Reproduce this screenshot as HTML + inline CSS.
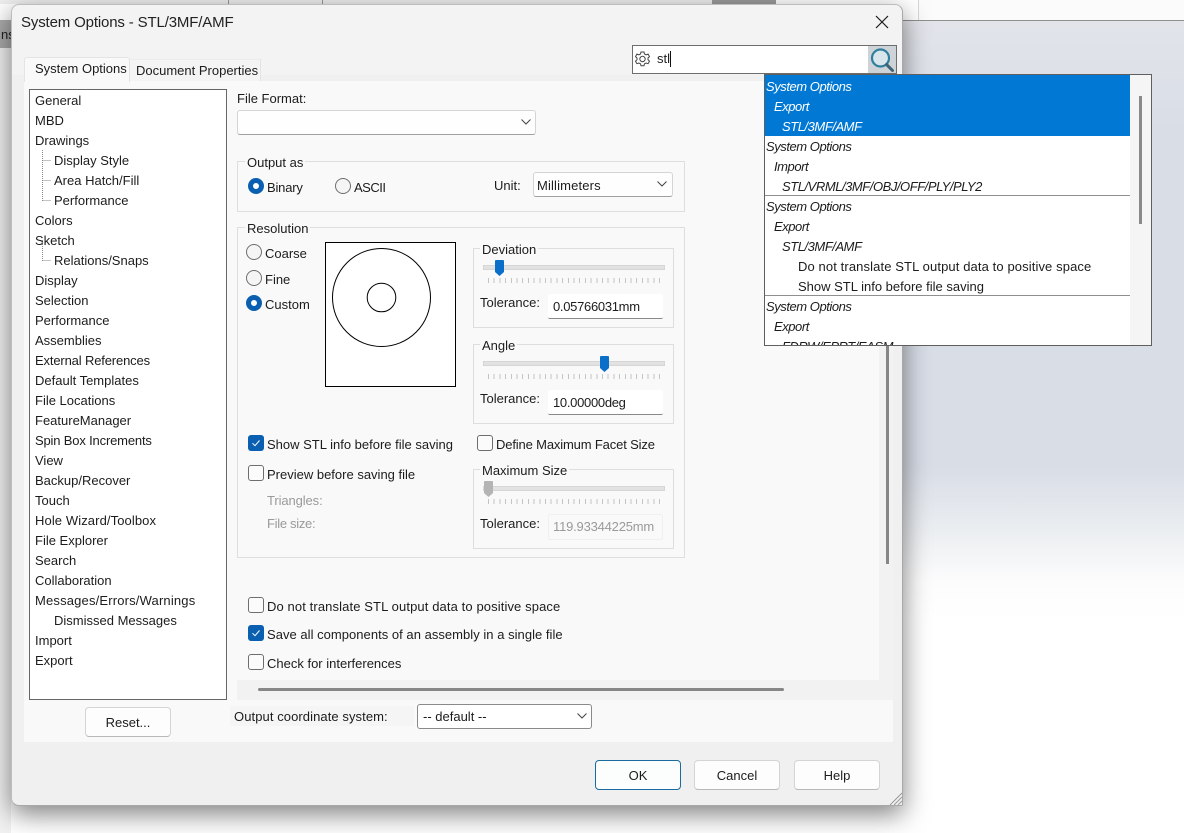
<!DOCTYPE html>
<html lang="en">
<head>
<meta charset="utf-8">
<title>System Options - STL/3MF/AMF</title>
<style>
html,body{margin:0;padding:0;width:1184px;height:833px;overflow:hidden;background:#fff}
body{position:relative;font-family:"Liberation Sans",sans-serif;font-size:13px;color:#1c1c1c}
div,span{box-sizing:border-box}
.a{position:absolute}
.t{position:absolute;white-space:nowrap;line-height:16px;font-size:13px;letter-spacing:0}
.g{color:#9a9a9a}
.i{font-style:italic;letter-spacing:-.45px}
.box{position:absolute;border:1px solid #dedede}
.lg{position:absolute;background:#f9f9f9;padding:0 2px;white-space:nowrap;line-height:16px;letter-spacing:0}
.btn{position:absolute;background:#fdfdfd;border:1px solid #d4d4d4;border-bottom-color:#b8b8b8;border-radius:4px;text-align:center;line-height:29px}
.sel{position:absolute;background:#fefefe;border:1px solid #d4d4d4;border-bottom-color:#a0a0a0;border-radius:3px}
.chev{position:absolute;width:10px;height:6px}
.r{position:absolute;width:16px;height:16px;border-radius:50%;border:1px solid #6e6e6e;background:#f5f5f5}
.r.on{border:5px solid #0a5fb0;background:#fff}
.c{position:absolute;width:16px;height:16px;border-radius:3px;border:1px solid #6e6e6e;background:#fbfbfb}
.c.on{border:0;background:#0a5fb0}
.track{position:absolute;height:5px;background:#e2e2e2;border:1px solid #d6d6d6}
.tick{position:absolute;height:5px;background:repeating-linear-gradient(90deg,#c4c4c4 0 1px,transparent 1px 5.7px)}
.inp{position:absolute;background:#fff;border-bottom:1px solid #8a8a8a;border-radius:2px;line-height:26px;padding-left:5px;letter-spacing:-.3px;white-space:nowrap}
.sl{position:absolute;width:9px;height:16px}
</style>
</head>
<body>
<!-- desktop background -->
<div class="a" style="left:918px;top:0;width:266px;height:20px;background:#fbfbfb;border-left:1px solid #d8d8d8"></div>
<div class="a" style="left:903px;top:20px;width:281px;height:1px;background:#8f8f8f"></div>
<div class="a" style="left:903px;top:21px;width:281px;height:812px;background:linear-gradient(180deg,#e2e4ea 0,#d8dde6 120px,#d8dde6 445px,#ebeef1 510px,#fcfcfc 560px,#fff 600px)"></div>
<div class="a" style="left:0;top:20px;width:11px;height:28px;background:#ababab"></div>
<div class="a" style="left:0;top:48px;width:11px;height:785px;background:#f2f2f2"></div>
<div class="t" style="left:1px;top:27px;color:#222">ns</div>
<div class="a" style="left:0;top:0;width:760px;height:4px;background:#efefef"></div>
<div class="a" style="left:712px;top:0;width:64px;height:4px;background:#9b9b9b"></div>
<div class="a" style="left:228px;top:0;width:1px;height:4px;background:#999"></div>
<div class="a" style="left:322px;top:0;width:1px;height:4px;background:#999"></div>

<!-- dialog -->
<div class="a" style="left:11px;top:4px;width:892px;height:802px;background:#f0f0f0;border:1px solid #bdbdbd;border-right-color:#a8a8a8;border-bottom-color:#a8a8a8;border-radius:8px 8px 2px 8px;box-shadow:0 8px 26px rgba(0,0,0,.5)"></div>
<div class="a" style="left:12px;top:5px;width:890px;height:70px;background:#f3f3f3;border-radius:8px 8px 0 0"></div>
<div class="t" style="left:21px;top:14px;font-size:15px;line-height:18px;letter-spacing:-.15px;color:#222">System Options - STL/3MF/AMF</div>
<svg class="a" style="left:875px;top:15px" width="14" height="14" viewBox="0 0 14 14"><path d="M1 1L13 13M13 1L1 13" stroke="#1a1a1a" stroke-width="1.2" fill="none"/></svg>

<!-- tabs and panel -->
<div class="a" style="left:24px;top:81px;width:869px;height:661px;background:#f9f9f9"></div>
<div class="a" style="left:130px;top:59px;width:131px;height:22px;background:#f4f4f4;border-top:1px solid #ececec;border-right:1px solid #e4e4e4"></div>
<div class="a" style="left:24px;top:57px;width:106px;height:25px;background:#f9f9f9;border:1px solid #e4e4e4;border-bottom:0;border-radius:3px 3px 0 0"></div>
<div class="t" style="left:35px;top:61px">System Options</div>
<div class="t" style="left:136px;top:63px">Document Properties</div>

<!-- search box -->
<div class="a" style="left:632px;top:45px;width:265px;height:29px;background:#fff;border:1px solid #6d6d6d"></div>
<div class="a" style="left:868px;top:46px;width:28px;height:27px;background:#cdd3d7"></div>
<svg class="a" style="left:634px;top:50px" width="17" height="18" viewBox="0 0 17 18"><path d="M7 2h3l.5 2 1.600.8 2-.7 1.400 2.500-1.500 1.400v1.800l1.500 1.400-1.400 2.500-2-.7-1.600.8-.5 2H7l-.5-2-1.600-.8-2 .7-1.400-2.500 1.500-1.400V8L1.500 6.600 2.900 4.100l2 .7L6.500 4z" fill="none" stroke="#444" stroke-width="1"/><circle cx="8.500" cy="9" r="2.700" fill="none" stroke="#444"/></svg>
<div class="t" style="left:657px;top:51px;color:#222">stl</div>
<div class="a" style="left:670px;top:51px;width:1px;height:16px;background:#111"></div>
<svg class="a" style="left:868px;top:46px" width="29" height="28" viewBox="0 0 29 28"><circle cx="12.500" cy="12" r="8.500" fill="#d8e6ec" stroke="#2f7e9d" stroke-width="2.200"/><path d="M18.500 18.500L24.500 24.500" stroke="#3d6474" stroke-width="3" stroke-linecap="round"/></svg>

<!-- tree -->
<div class="a" style="left:29px;top:89px;width:198px;height:611px;background:#fff;border:1px solid #666"></div>
<div class="t" style="left:35px;top:93px">General</div>
<div class="t" style="left:35px;top:113px">MBD</div>
<div class="t" style="left:35px;top:133px">Drawings</div>
<div class="t" style="left:54px;top:153px">Display Style</div>
<div class="t" style="left:54px;top:173px">Area Hatch/Fill</div>
<div class="t" style="left:54px;top:193px">Performance</div>
<div class="t" style="left:35px;top:213px">Colors</div>
<div class="t" style="left:35px;top:233px">Sketch</div>
<div class="t" style="left:54px;top:253px">Relations/Snaps</div>
<div class="t" style="left:35px;top:273px">Display</div>
<div class="t" style="left:35px;top:293px">Selection</div>
<div class="t" style="left:35px;top:313px">Performance</div>
<div class="t" style="left:35px;top:333px">Assemblies</div>
<div class="t" style="left:35px;top:353px;letter-spacing:-.15px">External References</div>
<div class="t" style="left:35px;top:373px">Default Templates</div>
<div class="t" style="left:35px;top:393px">File Locations</div>
<div class="t" style="left:35px;top:413px">FeatureManager</div>
<div class="t" style="left:35px;top:433px;letter-spacing:-.17px">Spin Box Increments</div>
<div class="t" style="left:35px;top:453px">View</div>
<div class="t" style="left:35px;top:473px">Backup/Recover</div>
<div class="t" style="left:35px;top:493px">Touch</div>
<div class="t" style="left:35px;top:513px;letter-spacing:.1px">Hole Wizard/Toolbox</div>
<div class="t" style="left:35px;top:533px">File Explorer</div>
<div class="t" style="left:35px;top:553px">Search</div>
<div class="t" style="left:35px;top:573px">Collaboration</div>
<div class="t" style="left:35px;top:593px;letter-spacing:.17px">Messages/Errors/Warnings</div>
<div class="t" style="left:54px;top:613px">Dismissed Messages</div>
<div class="t" style="left:35px;top:633px">Import</div>
<div class="t" style="left:35px;top:653px">Export</div>
<svg class="a" style="left:40px;top:148px" width="14" height="120" viewBox="0 0 14 120" fill="none" stroke="#888" stroke-dasharray="1 1"><path d="M2.500 2V53M2.500 12.500H11M2.500 32.500H11M2.500 52.500H11M2.500 92V113M2.500 112.500H11"/></svg>
<div class="btn" style="left:85px;top:707px;width:86px;height:30px">Reset...</div>

<!-- file format -->
<div class="t" style="left:237px;top:91px">File Format:</div>
<div class="sel" style="left:237px;top:110px;width:299px;height:25px"></div>
<svg class="chev" style="left:521px;top:119px" viewBox="0 0 10 6"><path d="M.5.500L5 5 9.500.500" fill="none" stroke="#444"/></svg>

<!-- output as -->
<div class="box" style="left:237px;top:161px;width:448px;height:51px"></div>
<div class="lg" style="left:245px;top:155px">Output as</div>
<div class="r on" style="left:248px;top:178px"></div>
<div class="t" style="left:267px;top:180px;letter-spacing:-.2px">Binary</div>
<div class="r" style="left:335px;top:178px"></div>
<div class="t" style="left:354px;top:180px;letter-spacing:-.5px">ASCII</div>
<div class="t" style="left:494px;top:178px">Unit:</div>
<div class="sel" style="left:533px;top:172px;width:140px;height:25px"></div>
<div class="t" style="left:537px;top:178px;letter-spacing:.15px">Millimeters</div>
<svg class="chev" style="left:657px;top:181px" viewBox="0 0 10 6"><path d="M.5.500L5 5 9.500.500" fill="none" stroke="#444"/></svg>

<!-- resolution -->
<div class="box" style="left:237px;top:227px;width:448px;height:331px"></div>
<div class="lg" style="left:245px;top:221px">Resolution</div>
<div class="r" style="left:246px;top:244px"></div>
<div class="t" style="left:265px;top:246px">Coarse</div>
<div class="r" style="left:246px;top:270px"></div>
<div class="t" style="left:265px;top:272px">Fine</div>
<div class="r on" style="left:246px;top:295px"></div>
<div class="t" style="left:265px;top:297px">Custom</div>
<svg class="a" style="left:325px;top:242px" width="131" height="145" viewBox="0 0 131 145"><rect x=".5" y=".5" width="130" height="144" fill="#fff" stroke="#000"/><circle cx="56.500" cy="55.500" r="49" fill="none" stroke="#000"/><circle cx="56.500" cy="55.500" r="14.300" fill="none" stroke="#000"/></svg>

<!-- deviation -->
<div class="box" style="left:473px;top:248px;width:201px;height:80px"></div>
<div class="lg" style="left:480px;top:242px">Deviation</div>
<div class="track" style="left:483px;top:265px;width:182px"></div>
<svg class="sl" style="left:495px;top:260px" viewBox="0 0 9 16"><path d="M1 0h7a1 1 0 0 1 1 1v11l-4.500 4L0 12V1a1 1 0 0 1 1-1z" fill="#0a6fc8"/></svg>
<div class="tick" style="left:488px;top:278px;width:173px"></div>
<div class="t" style="left:480px;top:295px">Tolerance:</div>
<div class="inp" style="left:548px;top:294px;width:115px;height:25px">0.05766031mm</div>

<!-- angle -->
<div class="box" style="left:473px;top:344px;width:201px;height:80px"></div>
<div class="lg" style="left:480px;top:338px">Angle</div>
<div class="track" style="left:483px;top:361px;width:182px"></div>
<svg class="sl" style="left:600px;top:356px" viewBox="0 0 9 16"><path d="M1 0h7a1 1 0 0 1 1 1v11l-4.500 4L0 12V1a1 1 0 0 1 1-1z" fill="#0a6fc8"/></svg>
<div class="tick" style="left:488px;top:374px;width:173px"></div>
<div class="t" style="left:480px;top:391px">Tolerance:</div>
<div class="inp" style="left:548px;top:390px;width:115px;height:25px">10.00000deg</div>

<!-- checks -->
<div class="c on" style="left:248px;top:435px"></div>
<svg class="a" style="left:248px;top:435px" width="16" height="16" viewBox="0 0 16 16"><path d="M4.500 8.200L7 10.700 11.500 5.500" fill="none" stroke="#fff" stroke-width="1"/></svg>
<div class="t" style="left:267px;top:437px">Show STL info before file saving</div>
<div class="c" style="left:477px;top:435px"></div>
<div class="t" style="left:496px;top:437px;letter-spacing:-.15px">Define Maximum Facet Size</div>
<div class="c" style="left:248px;top:465px"></div>
<div class="t" style="left:267px;top:467px">Preview before saving file</div>
<div class="t g" style="left:267px;top:493px;letter-spacing:-.1px">Triangles:</div>
<div class="t g" style="left:267px;top:516px;letter-spacing:-.3px">File size:</div>

<!-- maximum size -->
<div class="box" style="left:473px;top:469px;width:201px;height:80px"></div>
<div class="lg" style="left:480px;top:463px">Maximum Size</div>
<div class="track" style="left:483px;top:486px;width:182px"></div>
<svg class="sl" style="left:484px;top:481px" viewBox="0 0 9 16"><path d="M1 0h7a1 1 0 0 1 1 1v11l-4.500 4L0 12V1a1 1 0 0 1 1-1z" fill="#b4b4b4"/></svg>
<div class="tick" style="left:488px;top:499px;width:173px"></div>
<div class="t" style="left:480px;top:516px">Tolerance:</div>
<div class="inp g" style="left:548px;top:514px;width:115px;height:26px;background:#f9f9f9;border:1px solid #f0f0f0;padding-left:4px;letter-spacing:-.2px;line-height:24px">119.93344225mm</div>

<div class="c" style="left:248px;top:597px"></div>
<div class="t" style="left:267px;top:599px;letter-spacing:.11px">Do not translate STL output data to positive space</div>
<div class="c on" style="left:248px;top:625px"></div>
<svg class="a" style="left:248px;top:625px" width="16" height="16" viewBox="0 0 16 16"><path d="M4.500 8.200L7 10.700 11.500 5.500" fill="none" stroke="#fff" stroke-width="1"/></svg>
<div class="t" style="left:267px;top:627px;letter-spacing:.03px">Save all components of an assembly in a single file</div>
<div class="c" style="left:248px;top:654px"></div>
<div class="t" style="left:267px;top:656px">Check for interferences</div>

<!-- scrollbars -->
<div class="a" style="left:237px;top:680px;width:656px;height:20px;background:#f2f2f2"></div>
<div class="a" style="left:258px;top:688px;width:526px;height:3px;background:#868686;border-radius:2px"></div>
<div class="a" style="left:879px;top:81px;width:14px;height:619px;background:#f2f2f2"></div>
<div class="a" style="left:886px;top:346px;width:3px;height:218px;background:#868686"></div>

<!-- coordinate system -->
<div class="a" style="left:230px;top:706px;width:184px;height:20px;background:#f5f5f5"></div>
<div class="t" style="left:234px;top:709px;letter-spacing:.08px">Output coordinate system:</div>
<div class="sel" style="left:417px;top:704px;width:175px;height:25px;background:#fff;border-color:#8a8a8a"></div>
<div class="t" style="left:423px;top:709px">-- default --</div>
<svg class="chev" style="left:577px;top:713px" viewBox="0 0 10 6"><path d="M.5.500L5 5 9.500.500" fill="none" stroke="#444"/></svg>

<!-- buttons -->
<div class="btn" style="left:595px;top:760px;width:86px;height:30px;border-color:#1c6b9f;background:#fcfdfd">OK</div>
<div class="btn" style="left:694px;top:760px;width:86px;height:30px">Cancel</div>
<div class="btn" style="left:794px;top:760px;width:86px;height:30px">Help</div>
<svg class="a" style="left:888px;top:791px" width="15" height="15" viewBox="0 0 15 15"><path d="M2 14L14 2M6 14L14 6M10 14L14 10" stroke="#9a9a9a" fill="none"/></svg>

<!-- search results dropdown -->
<div class="a" style="left:764px;top:74px;width:388px;height:272px;background:#fff;border:1px solid #5f5f5f;overflow:hidden">
  <div class="a" style="left:0;top:0;width:365px;height:61px;background:#0078d4"></div>
  <div class="a" style="left:365px;top:0;width:21px;height:270px;background:#f5f5f5"></div>
  <div class="a" style="left:374px;top:21px;width:3px;height:128px;background:#8a8a8a"></div>
  <div class="a" style="left:0;top:120px;width:365px;height:1px;background:#8f8f8f"></div>
  <div class="a" style="left:0;top:220px;width:365px;height:1px;background:#8f8f8f"></div>
  <div class="t i" style="left:1px;top:4px;color:#fff">System Options</div>
  <div class="t i" style="left:9px;top:24px;color:#fff">Export</div>
  <div class="t i" style="left:17px;top:44px;color:#fff">STL/3MF/AMF</div>
  <div class="t i" style="left:1px;top:64px">System Options</div>
  <div class="t i" style="left:9px;top:84px">Import</div>
  <div class="t i" style="left:17px;top:104px">STL/VRML/3MF/OBJ/OFF/PLY/PLY2</div>
  <div class="t i" style="left:1px;top:124px">System Options</div>
  <div class="t i" style="left:9px;top:144px">Export</div>
  <div class="t i" style="left:17px;top:164px">STL/3MF/AMF</div>
  <div class="t" style="left:33px;top:184px;letter-spacing:.11px">Do not translate STL output data to positive space</div>
  <div class="t" style="left:33px;top:204px">Show STL info before file saving</div>
  <div class="t i" style="left:1px;top:224px">System Options</div>
  <div class="t i" style="left:9px;top:244px">Export</div>
  <div class="t i" style="left:17px;top:264px">FDRW/EPRT/EASM</div>
</div>
</body>
</html>
